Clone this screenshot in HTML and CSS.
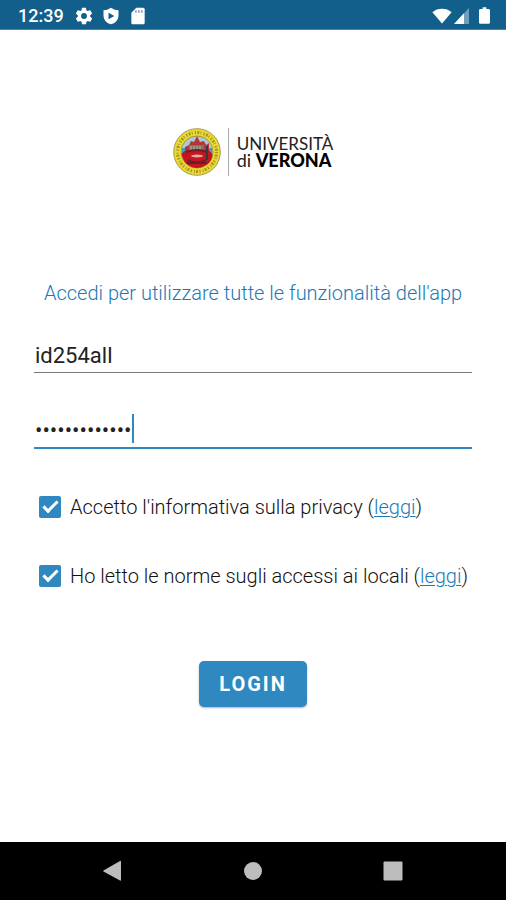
FILE: index.html
```html
<!DOCTYPE html>
<html lang="it">
<head>
  <meta charset="UTF-8" />
  <meta name="viewport" content="width=device-width, initial-scale=1" />
  <title>Università di Verona - Login</title>
  <link rel="stylesheet" href="styles.css">
</head>
<body>

  <!-- Status bar -->
  <header class="status-bar">
    <span class="clock">12:39</span>
    <svg class="status-icon" viewBox="0 0 24 24" width="20" height="20" aria-hidden="true">
      <path fill-rule="evenodd" d="M19.4 13c0-.3.1-.6.1-1s0-.7-.1-1l2.1-1.6c.2-.2.3-.4.1-.7l-2-3.4c-.1-.2-.4-.3-.6-.2l-2.5 1c-.5-.4-1.1-.7-1.7-1l-.4-2.6c0-.3-.2-.5-.5-.5h-4c-.3 0-.4.2-.5.5L9.1 5.1c-.6.3-1.2.6-1.7 1l-2.4-1c-.2-.1-.5 0-.6.2l-2 3.4c-.1.3-.1.5.1.7L4.6 11c0 .3-.1.7-.1 1s0 .7.1 1l-2.1 1.6c-.2.2-.2.4-.1.7l2 3.4c.1.2.4.3.6.2l2.4-1c.5.4 1.1.7 1.7 1l.4 2.6c.1.3.2.5.5.5h4c.3 0 .5-.2.5-.5l.4-2.6c.6-.3 1.2-.6 1.7-1l2.5 1c.2.1.5 0 .6-.2l2-3.4c.1-.3.1-.5-.1-.7zM12 15.5a3.500 3.500 0 1 1 0-7 3.500 3.500 0 0 1 0 7z"/>
    </svg>
    <svg class="status-icon" viewBox="0 0 24 24" width="20" height="20" aria-hidden="true">
      <path fill-rule="evenodd" d="M12 2C9 4 6 5 3 5v6c0 6 4 9.500 9 11 5-1.500 9-5 9-11V5c-3 0-6-1-9-3zM9 8l7 4-7 4z"/>
    </svg>
    <svg class="status-icon" viewBox="0 0 24 24" width="20" height="20" aria-hidden="true">
      <path d="M18 2h-8L4 8v12c0 1.100.9 2 2 2h12c1.100 0 2-.9 2-2V4c0-1.100-.9-2-2-2z"/>
      <path class="contacts" d="M9.500 5v3M13 5v3M16.500 5v3"/>
    </svg>
    <div class="signals">
      <svg viewBox="0 0 20 16" width="20" height="16" aria-hidden="true">
        <path d="M10 15.500L.4 4.200Q4.500.8 10 .8t9.600 3.400z"/>
      </svg>
      <svg viewBox="0 0 16 16" width="16" height="16" aria-hidden="true">
        <path opacity=".4" d="M15 0v16H0z"/>
        <path d="M10 5.300V16H0z"/>
      </svg>
      <svg class="battery" viewBox="0 0 12 18" width="11" height="17" aria-hidden="true">
        <path d="M4 0h4v2h2.500Q12 2 12 3.500v13q0 1.500-1.500 1.500h-9Q0 18 0 16.500v-13Q0 2 1.500 2H4z"/>
      </svg>
    </div>
  </header>

  <main class="login">
    <!-- Logo -->
    <div class="logo">
      <svg class="seal" viewBox="0 0 48 48" width="48" height="48" role="img" aria-label="Sigillo">
        <circle cx="24" cy="24" r="23.300" fill="#ecd92f" stroke="#a39c58" stroke-width="1"/>
        <circle cx="24" cy="24" r="19.500" fill="none" stroke="#a3942c" stroke-width="3" stroke-dasharray="1.200 1.500 2 1.200 .8 2.200"/>
        <circle cx="24" cy="24" r="16" fill="#a8cbd9" stroke="#a69636" stroke-width="1"/>
        <path d="M9 20h30v6H9z" fill="#4f94b9"/>
        <path d="M12 19l4-2 2-4 3 1 3-6 3 6 4-1 2 4 3-2v12H12z" fill="#b4363b"/>
        <path d="M16 17h15v5H16z" fill="#827064"/>
        <path d="M18 18v4M21 18v4M24 18v4M27 18v4" stroke="#b9b8a4" stroke-width="1"/>
        <path d="M8.500 26q3-4 8-4h16q5 0 7 5-1 8-8 11-8 4-15 0-6-3-8-12z" fill="#c5161e"/>
        <path d="M13 24q11-4 22 0M15 32q9 5 18 0M14 35h20" fill="none" stroke="#67202a" stroke-width="2"/>
        <ellipse cx="24" cy="28" rx="6" ry="1.500" fill="#e9aaa5"/>
        <path d="M34 18v14" stroke="#333a3d" stroke-width="2"/>
      </svg>
      <div class="logo-text">
        <span class="logo-top">UNIVERSITÀ</span>
        <span>di <b>VERONA</b></span>
      </div>
    </div>

    <p class="intro">Accedi per utilizzare tutte le funzionalità dell'app</p>

    <form class="login-form">
      <input class="field" type="text" value="id254all" aria-label="Nome utente" />
      <div class="password">
        <input class="field active" type="password" value="password12345" aria-label="Password" />
        <span class="caret"></span>
      </div>

      <div class="check-row">
        <input type="checkbox" id="privacy" checked />
        <label for="privacy">Accetto l'informativa sulla privacy (<a href="#">leggi</a>)</label>
      </div>
      <div class="check-row">
        <input type="checkbox" id="norme" checked />
        <label for="norme">Ho letto le norme sugli accessi ai locali (<a href="#">leggi</a>)</label>
      </div>

      <button class="login-button" type="button">LOGIN</button>
    </form>
  </main>

  <!-- Android navigation -->
  <nav class="nav-bar">
    <button type="button" aria-label="Indietro">
      <svg viewBox="0 0 22 22" width="22" height="22"><path d="M19 1.500v18.500q0 1-1 .5L1.500 11.500q-.8-.5 0-1L18 1q1-.5 1 .5z"/></svg>
    </button>
    <button type="button" aria-label="Home">
      <svg viewBox="0 0 22 22" width="22" height="22"><circle cx="11" cy="11" r="9"/></svg>
    </button>
    <button type="button" aria-label="Recenti">
      <svg viewBox="0 0 22 22" width="22" height="22"><rect x="1.500" y="1.500" width="19" height="19" rx="1"/></svg>
    </button>
  </nav>

</body>
</html>
```
FILE: styles.css
```css
:root {
  --blue: #2f89c0;
  --dark-blue: #135f8c;
  --text: #111;
}

* {
  box-sizing: border-box;
}

body {
  margin: 0;
  min-height: 100vh;
  display: flex;
  flex-direction: column;
  background: #fff;
  color: var(--text);
  font-family: Roboto, sans-serif;
  font-size: 20px;
  font-weight: 300;
  line-height: 24px;
}

/* Status bar */
.status-bar {
  display: flex;
  align-items: center;
  gap: 7px;
  height: 30px;
  padding: 2px 16px 0 18px;
  background: var(--dark-blue);
  border-bottom: 1px solid #4c83a5;
  color: #fff;
}

.status-bar svg {
  fill: #fff;
}

.status-bar .contacts {
  stroke: #7fa5bf;
  stroke-width: 2;
}

.clock {
  margin-right: 3px;
  font-size: 18px;
  font-weight: 500;
}

.signals {
  display: flex;
  align-items: center;
  gap: 2px;
  margin-left: auto;
}

.battery {
  margin-left: 7px;
}

/* Login */
.login {
  flex: 1;
  padding: 98px 34px 32px;
}

.logo {
  display: flex;
  justify-content: center;
  align-items: center;
  gap: 7px;
}

.logo-text {
  display: flex;
  flex-direction: column;
  padding: 8px 0 8px 8px;
  border-left: 1px solid #aaa;
  color: #222;
  font-family: Lato, sans-serif;
  font-size: 18px;
  font-weight: 400;
  line-height: 16px;
}

.logo-top {
  font-size: 17px;
}

.logo-text b {
  color: #000;
  font-weight: 900;
}

.intro {
  margin: 105px 0 34px;
  color: #1b7ab4;
  text-align: center;
}

.login-form {
  display: flex;
  flex-direction: column;
}

.field {
  display: block;
  width: 100%;
  height: 34px;
  padding: 0 0 0 1px;
  border: 0;
  border-bottom: 1px solid #777;
  border-radius: 0;
  outline: none;
  background: none;
  color: #222;
  font: inherit;
  font-size: 22px;
  font-weight: 400;
}

.field.active {
  height: 36px;
  border-bottom: 2px solid var(--blue);
}

.password {
  position: relative;
  margin: 40px 0 46px;
}

.caret {
  position: absolute;
  left: 98px;
  top: 1px;
  width: 2px;
  height: 29px;
  background: var(--blue);
}

.check-row {
  display: flex;
  align-items: center;
  gap: 9px;
  margin-bottom: 45px;
  padding-left: 5px;
}

.check-row input {
  appearance: none;
  flex: none;
  display: grid;
  place-items: center;
  width: 22px;
  height: 22px;
  margin: 0;
  border-radius: 2px;
  background: var(--blue);
}

.check-row input:checked::before {
  content: "";
  width: 15px;
  height: 8px;
  margin-bottom: 5px;
  box-sizing: border-box;
  border: solid #fff;
  border-width: 0 0 3px 3px;
  transform: rotate(-45deg);
}

.check-row a {
  color: #1b7ab4;
  text-decoration-thickness: 1px;
  text-underline-offset: 2px;
}

.login-button {
  align-self: center;
  height: 46px;
  margin-top: 28px;
  padding: 0 20px;
  border: 0;
  border-radius: 5px;
  background: var(--blue);
  box-shadow: 0 1px 2px rgba(0, 0, 0, 0.3);
  color: #fff;
  font: inherit;
  font-weight: 700;
  letter-spacing: 2px;
}

/* Navigation bar */
.nav-bar {
  display: flex;
  justify-content: center;
  align-items: center;
  gap: 118px;
  height: 58px;
  background: #000;
}

.nav-bar button {
  display: flex;
  padding: 0;
  border: 0;
  background: none;
}

.nav-bar svg {
  fill: #bdbdbd;
}
```
